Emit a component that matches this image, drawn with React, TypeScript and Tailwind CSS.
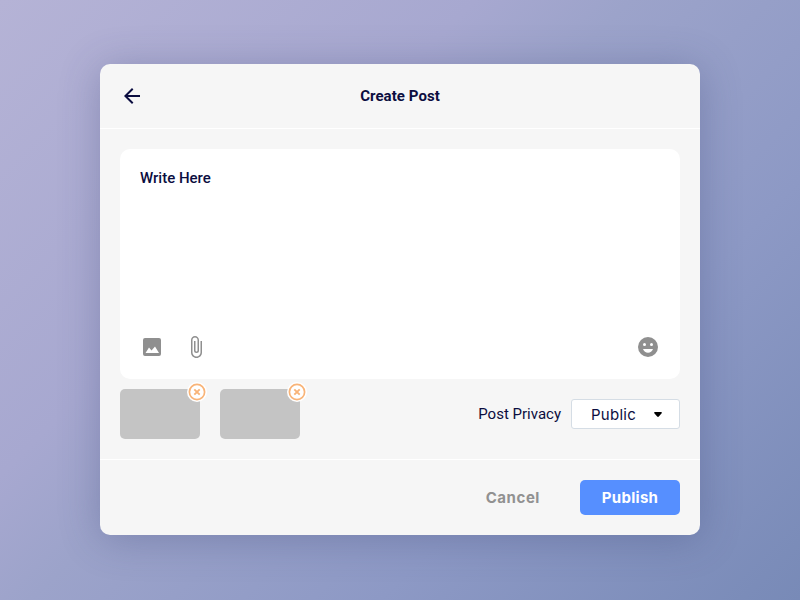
import type { ReactNode } from "react";

function Icon({ children, className = "" }: { children: ReactNode; className?: string }) {
  return (
    <svg viewBox="0 0 24 24" fill="currentColor" className={`size-6 shrink-0 ${className}`}>
      {children}
    </svg>
  );
}

function Thumbnail() {
  return (
    <div className="relative h-[50px] w-20 rounded-[5px] bg-[#c4c4c4]">
      <button aria-label="Remove" className="absolute -top-[7px] -right-[7px] size-5">
        <svg viewBox="0 0 20 20" fill="none" className="size-5">
          <circle cx="10" cy="10" r="10" fill="#fff" />
          <circle cx="10" cy="10" r="7.6" stroke="#f9b478" strokeWidth="1.700" />
          <path d="M7.300 7.300l5.400 5.400M12.700 7.300l-5.400 5.400" stroke="#f9b478" strokeWidth="1.900" />
        </svg>
      </button>
    </div>
  );
}

export default function App() {
  return (
    <div className="flex h-[600px] w-[800px] justify-center overflow-hidden bg-[linear-gradient(135deg,#b5b3d6_0%,#a7a8d0_34%,#9ca3ca_45%,#8d99c5_70%,#788ab7_100%)] pt-16 font-['Roboto',sans-serif] text-[#0b0d40]">
      <div className="flex h-[471px] w-[600px] flex-col rounded-[10px] bg-[#f6f6f6] shadow-[0_4px_40px_rgba(50,60,110,0.3)]">
        <header className="grid h-[65px] grid-cols-[1fr_auto_1fr] items-center border-b border-white px-5">
          <Icon>
            <path d="M20 11H7.83l5.59-5.59L12 4l-8 8 8 8 1.41-1.41L7.83 13H20v-2z" />
          </Icon>
          <h1 className="text-[15px] font-bold tracking-[0.06px]">Create Post</h1>
        </header>
        <main className="flex flex-1 flex-col gap-2.5 px-5 pt-5">
          <section className="flex h-[230px] flex-col justify-between rounded-[10px] bg-white p-5">
            <p className="text-[15px] leading-[18px] font-medium">Write Here</p>
            <div className="flex items-center text-[#8f8f8f]">
              <Icon>
                <path d="M21 5v14a2 2 0 0 1-2 2H5a2 2 0 0 1-2-2V5a2 2 0 0 1 2-2h14a2 2 0 0 1 2 2zM5.500 18h13.500l-4-6.500-3.500 4-2.500-3z" />
              </Icon>
              <Icon className="ml-5">
                <path d="M16.5 6v11.5c0 2.21-1.79 4-4 4s-4-1.79-4-4V5a2.5 2.5 0 0 1 5 0v10.5c0 .55-.45 1-1 1s-1-.45-1-1V6H10v9.5a2.5 2.5 0 0 0 5 0V5c0-2.21-1.79-4-4-4S7 2.79 7 5v12.5c0 3.04 2.46 5.5 5.5 5.5s5.5-2.46 5.5-5.5V6h-1.5z" />
              </Icon>
              <Icon className="ml-auto">
                <circle cx="12" cy="12" r="10" />
                <circle cx="8.5" cy="9.5" r="1.5" fill="white" />
                <circle cx="15.5" cy="9.5" r="1.5" fill="white" />
                <path d="M7 14h10c-.8 2.200-2.700 3.700-5 3.700S7.800 16.200 7 14z" fill="white" />
              </Icon>
            </div>
          </section>
          <section className="flex items-center justify-between">
            <div className="flex gap-5">
              <Thumbnail />
              <Thumbnail />
            </div>
            <div className="flex items-center gap-2.5">
              <span className="text-[15px]">Post Privacy</span>
              <button className="flex h-[30px] w-[109px] items-center justify-between rounded-[3px] border border-[#d5dde5] bg-white pr-[17px] pl-[19px]">
                <span className="pt-0.5 font-['Inter',sans-serif] text-[15px] tracking-[0.25px]">Public</span>
                <svg viewBox="0 0 10 6" preserveAspectRatio="none" className="h-[5px] w-2">
                  <path d="M1 0h8a.9.9 0 0 1 .6 1.500L6 5.400a1.300 1.300 0 0 1-2 0L.4 1.500A.9.9 0 0 1 1 0z" fill="#000" />
                </svg>
              </button>
            </div>
          </section>
        </main>
        <footer className="flex h-[76px] items-center justify-end border-t border-white px-5 font-['Inter',sans-serif] text-[15px] font-bold">
          <button className="mr-10 pt-0.5 tracking-[0.55px] text-[#919191]">Cancel</button>
          <button className="h-[35px] w-[100px] rounded-[5px] bg-[#568fff] pt-0.5 tracking-[0.3px] text-white">
            Publish
          </button>
        </footer>
      </div>
    </div>
  );
}
